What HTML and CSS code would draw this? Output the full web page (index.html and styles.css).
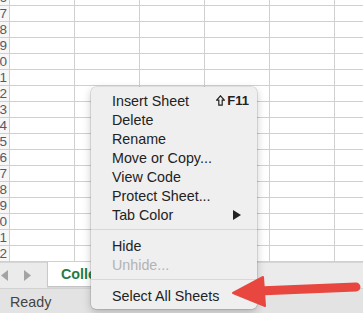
FILE: index.html
```html
<!DOCTYPE html>
<html>
<head>
<meta charset="utf-8">
<link rel="stylesheet" href="styles.css">
</head>
<body>
<div class="app">
  <div class="sheet">
    <div class="rows">
      <div class="row"><div class="rh"><span>6</span></div><div class="c"></div><div class="c"></div><div class="c"></div><div class="c"></div><div class="c"></div><div class="c"></div></div>
      <div class="row"><div class="rh"><span>7</span></div><div class="c"></div><div class="c"></div><div class="c"></div><div class="c"></div><div class="c"></div><div class="c"></div></div>
      <div class="row"><div class="rh"><span>8</span></div><div class="c"></div><div class="c"></div><div class="c"></div><div class="c"></div><div class="c"></div><div class="c"></div></div>
      <div class="row"><div class="rh"><span>9</span></div><div class="c"></div><div class="c"></div><div class="c"></div><div class="c"></div><div class="c"></div><div class="c"></div></div>
      <div class="row"><div class="rh"><span>10</span></div><div class="c"></div><div class="c"></div><div class="c"></div><div class="c"></div><div class="c"></div><div class="c"></div></div>
      <div class="row"><div class="rh"><span>11</span></div><div class="c"></div><div class="c"></div><div class="c"></div><div class="c"></div><div class="c"></div><div class="c"></div></div>
      <div class="row"><div class="rh"><span>12</span></div><div class="c"></div><div class="c"></div><div class="c"></div><div class="c"></div><div class="c"></div><div class="c"></div></div>
      <div class="row"><div class="rh"><span>13</span></div><div class="c"></div><div class="c"></div><div class="c"></div><div class="c"></div><div class="c"></div><div class="c"></div></div>
      <div class="row"><div class="rh"><span>14</span></div><div class="c"></div><div class="c"></div><div class="c"></div><div class="c"></div><div class="c"></div><div class="c"></div></div>
      <div class="row"><div class="rh"><span>15</span></div><div class="c"></div><div class="c"></div><div class="c"></div><div class="c"></div><div class="c"></div><div class="c"></div></div>
      <div class="row"><div class="rh"><span>16</span></div><div class="c"></div><div class="c"></div><div class="c"></div><div class="c"></div><div class="c"></div><div class="c"></div></div>
      <div class="row"><div class="rh"><span>17</span></div><div class="c"></div><div class="c"></div><div class="c"></div><div class="c"></div><div class="c"></div><div class="c"></div></div>
      <div class="row"><div class="rh"><span>18</span></div><div class="c"></div><div class="c"></div><div class="c"></div><div class="c"></div><div class="c"></div><div class="c"></div></div>
      <div class="row"><div class="rh"><span>19</span></div><div class="c"></div><div class="c"></div><div class="c"></div><div class="c"></div><div class="c"></div><div class="c"></div></div>
      <div class="row"><div class="rh"><span>20</span></div><div class="c"></div><div class="c"></div><div class="c"></div><div class="c"></div><div class="c"></div><div class="c"></div></div>
      <div class="row"><div class="rh"><span>21</span></div><div class="c"></div><div class="c"></div><div class="c"></div><div class="c"></div><div class="c"></div><div class="c"></div></div>
      <div class="row"><div class="rh"><span>22</span></div><div class="c"></div><div class="c"></div><div class="c"></div><div class="c"></div><div class="c"></div><div class="c"></div></div>
    </div>
  </div>
  <div class="tabbar">
    <div class="navs">
      <svg class="nav" width="8" height="11" viewBox="0 0 8 11"><polygon points="7,0 7,11 0,5.5" fill="#a3a3a3"/></svg>
      <svg class="nav" width="8" height="11" viewBox="0 0 8 11"><polygon points="1,0 1,11 8,5.5" fill="#a3a3a3"/></svg>
    </div>
    <div class="tab">Colle</div>
  </div>
  <div class="status">Ready</div>

  <div class="menu">
    <div class="item"><span>Insert Sheet</span><span class="sc"><svg width="9" height="11" viewBox="0 0 9 11"><path d="M4.5 0.8 L8.3 5.2 L6.2 5.2 L6.2 10.2 L2.8 10.2 L2.8 5.2 L0.7 5.2 Z" fill="none" stroke="#222" stroke-width="1.2" stroke-linejoin="miter"/></svg>F11</span></div>
    <div class="item">Delete</div>
    <div class="item">Rename</div>
    <div class="item">Move or Copy...</div>
    <div class="item">View Code</div>
    <div class="item">Protect Sheet...</div>
    <div class="item"><span>Tab Color</span><svg class="sub" width="8" height="10" viewBox="0 0 8 10"><polygon points="0,0 8,5 0,10" fill="#222"/></svg></div>
    <div class="sep"></div>
    <div class="item">Hide</div>
    <div class="item dis">Unhide...</div>
    <div class="sep"></div>
    <div class="item">Select All Sheets</div>
  </div>

  <svg class="arrow" width="363" height="313" viewBox="0 0 363 313">
    <line x1="258" y1="291" x2="356" y2="287" stroke="#e8473f" stroke-width="9" stroke-linecap="round"/>
    <polygon points="233,293 263,277 265,306" fill="#e8473f" stroke="#e8473f" stroke-width="2" stroke-linejoin="round"/>
  </svg>
</div>
</body>
</html>
```
FILE: styles.css
```css
html, body {
  margin: 0;
  padding: 0;
  overflow: hidden;
}
body {
  font-family: "Liberation Sans", Arial, sans-serif;
  width: 363px;
  height: 313px;
}
.app {
  position: relative;
  width: 363px;
  height: 313px;
  display: flex;
  flex-direction: column;
  overflow: hidden;
}
.sheet {
  height: 262px;
  overflow: hidden;
  background: #fff;
  flex: none;
}
.rows {
  margin-top: -10px;
}
.row {
  display: flex;
  height: 16px;
}
.rh {
  flex: none;
  width: 10px;
  height: 16px;
  box-sizing: border-box;
  border-right: 1px solid #d0d0d0;
  border-bottom: 1px solid #d0d0d0;
  background: #f7f7f7;
  display: flex;
  justify-content: flex-end;
  align-items: center;
  padding-right: 2px;
  overflow: hidden;
  font-size: 13.5px;
  color: #55586a;
  white-space: nowrap;
}
.c {
  flex: none;
  width: 65px;
  height: 16px;
  box-sizing: border-box;
  border-right: 1px solid #d0d0d0;
  border-bottom: 1px solid #d0d0d0;
}
.tabbar {
  height: 26px;
  flex: none;
  background: #ebebeb;
  border-top: 1px solid #d6d6d6;
  box-sizing: border-box;
  display: flex;
  align-items: flex-start;
}
.navs {
  width: 47px;
  display: flex;
  align-items: center;
  gap: 14px;
  padding-left: 1px;
  height: 24px;
  box-sizing: border-box;
}
.tab {
  margin-top: -1px;
  height: 25px;
  box-sizing: border-box;
  background: #fff;
  border-left: 1px solid #c9c9c9;
  border-bottom: 1px solid #c4c4c4;
  padding-left: 13px;
  width: 120px;
  display: flex;
  align-items: center;
  font-weight: bold;
  font-size: 14.3px;
  color: #1e7c45;
  box-shadow: 0 1px 1px rgba(0,0,0,0.08);
  white-space: nowrap;
  overflow: hidden;
}
.status {
  flex: 1;
  background: #e3e3e3;
  border-top: 1px solid #d2d2d2;
  font-size: 14.3px;
  color: #444;
  padding-left: 10px;
  display: flex;
  align-items: center;
  padding-top: 2px;
  box-sizing: border-box;
}
.menu {
  position: absolute;
  left: 91px;
  top: 87px;
  width: 166px;
  height: 222px;
  box-sizing: border-box;
  background: #efefef;
  border-radius: 5px;
  box-shadow: 0 0 0 0.5px rgba(0,0,0,0.18), 0 3px 9px rgba(0,0,0,0.22);
  padding: 4px 0 5px;
  font-size: 14.3px;
  color: #222;
}
.item {
  height: 19px;
  display: flex;
  align-items: center;
  justify-content: space-between;
  padding: 0 8px 0 21px;
  white-space: nowrap;
}
.item.dis {
  color: #b3b3b3;
}
.sc {
  display: flex;
  align-items: center;
  gap: 2px;
  font-size: 13px;
  font-weight: bold;
  color: #222;
}
.sub {
  margin-right: 8px;
}
.sep {
  height: 1px;
  background: #d8d8d8;
  margin: 5px 0 6px;
}
.arrow {
  position: absolute;
  left: 0;
  top: 0;
  pointer-events: none;
}
```
